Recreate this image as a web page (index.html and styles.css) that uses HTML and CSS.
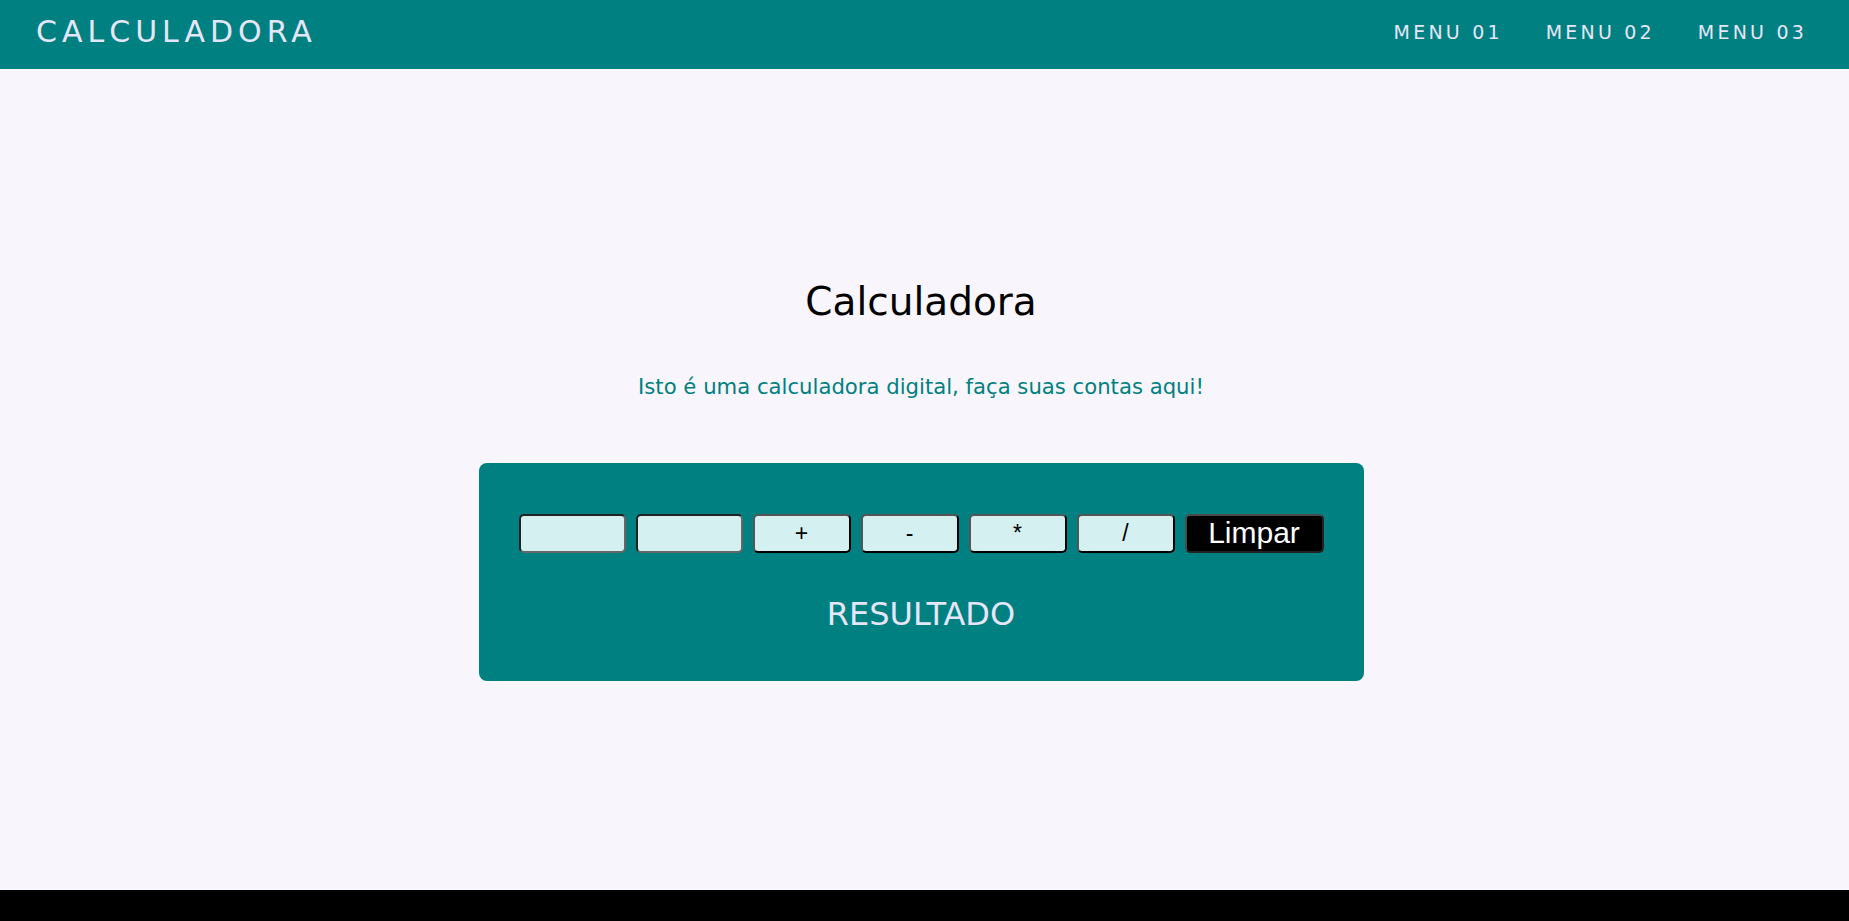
FILE: index.html
```html
<!DOCTYPE html>
<html lang="pt-BR">
<head>
<meta charset="utf-8">
<title>Calculadora</title>
<link rel="stylesheet" href="styles.css">
</head>
<body>
<header class="topbar">
  <div class="logo">CALCULADORA</div>
  <nav class="menu">
    <a class="menu-item" href="#">MENU 01</a>
    <a class="menu-item" href="#">MENU 02</a>
    <a class="menu-item" href="#">MENU 03</a>
  </nav>
</header>
<main class="content">
  <h1 class="title">Calculadora</h1>
  <p class="subtitle">Isto é uma calculadora digital, faça suas contas aqui!</p>
  <section class="calc">
    <div class="calc-row">
      <input class="num" type="text">
      <input class="num" type="text">
      <button class="op">+</button>
      <button class="op">-</button>
      <button class="op">*</button>
      <button class="op">/</button>
      <button class="clear">Limpar</button>
    </div>
    <div class="result">RESULTADO</div>
  </section>
</main>
<footer class="footer"></footer>
</body>
</html>
```

FILE: styles.css
```css
* { box-sizing: border-box; }

html, body {
  margin: 0;
  padding: 0;
}

body {
  min-height: 100vh;
  display: flex;
  flex-direction: column;
  background: #f8f6fc;
  font-family: "DejaVu Sans", sans-serif;
}

.topbar {
  height: 69px;
  background: #008080;
  display: flex;
  align-items: center;
  justify-content: space-between;
  padding: 0 42px 5px 36px;
  color: #e6e6fa;
}

.logo {
  font-size: 30px;
  letter-spacing: 5px;
  line-height: 1;
}

.menu {
  display: flex;
  gap: 43px;
}

.menu-item {
  color: #e6e6fa;
  text-decoration: none;
  font-size: 19px;
  letter-spacing: 3.2px;
  line-height: 1;
}

.content {
  flex: 1;
  display: flex;
  flex-direction: column;
  align-items: center;
  justify-content: center;
  padding-right: 7px;
}

.title {
  margin: 0;
  font-size: 39px;
  line-height: 46px;
  font-weight: normal;
  color: #000;
}

.subtitle {
  margin: 49px 0 0;
  font-size: 21.2px;
  line-height: 26px;
  color: #008080;
}

.calc {
  margin-top: 63px;
  width: 885px;
  background: #008080;
  border-radius: 8px;
  padding: 51px 40px 48px;
}

.calc-row {
  display: flex;
  justify-content: space-between;
  height: 39px;
}

.num {
  width: 107px;
  height: 39px;
  background: #d5f0f0;
  border: 2px solid;
  border-color: #222 #666 #666 #222;
  border-radius: 5px;
  outline: none;
}

.op {
  width: 98px;
  height: 39px;
  background: #d5f0f0;
  border: 2px solid;
  border-color: #555 #000 #000 #555;
  border-radius: 5px;
  font-family: "Liberation Sans", Arial, sans-serif;
  font-size: 23px;
  color: #000;
  padding: 0;
}

.clear {
  width: 139px;
  height: 39px;
  background: #000;
  border: 2px solid;
  border-color: #4a4a4a #222 #222 #4a4a4a;
  border-radius: 5px;
  font-family: "Liberation Sans", Arial, sans-serif;
  font-size: 30px;
  color: #fff;
  padding: 0;
  line-height: 1;
}

.result {
  margin-top: 42px;
  text-align: center;
  font-size: 32px;
  line-height: 38px;
  color: #e6e6fa;
}

.footer {
  height: 31px;
  background: #000;
}
```
